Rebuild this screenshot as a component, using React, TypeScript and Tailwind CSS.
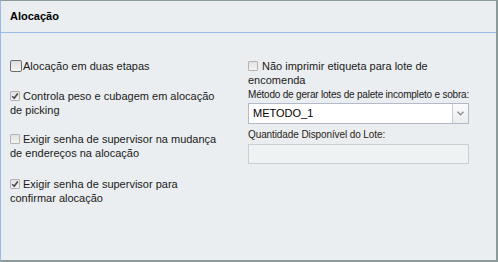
import React from 'react';

interface CheckProps {
  checked?: boolean;
  large?: boolean;
}

const Check: React.FC<CheckProps> = ({ checked, large }) => {
  if (large) {
    return (
      <span className="inline-block align-[-2px] w-[12px] h-[12px] mr-[1px] rounded-[2px] border border-[#6d6d6d] bg-gradient-to-b from-[#dcdcdc] to-[#f4f4f4]" />
    );
  }
  return (
    <span className="relative inline-block align-[-1px] w-[10px] h-[10px] mr-[3px] rounded-[1px] border border-[#b4b4b4] bg-gradient-to-b from-[#e2e2e2] to-[#f3f3f3]">
      {checked && (
        <svg className="absolute left-[0px] top-[0px] w-[8px] h-[8px]" viewBox="0 0 8 8">
          <path d="M1.2 4.2 L3.2 6.2 L6.8 1.4" fill="none" stroke="#4a4a4a" strokeWidth={1.6} />
        </svg>
      )}
    </span>
  );
};

const Item: React.FC<{ checked?: boolean; large?: boolean; className?: string; children: React.ReactNode }> = ({
  checked,
  large,
  className,
  children
}) => (
  <div className={`leading-[14px] text-[11px] text-[#1a1a1a] ${className ?? ''}`}>
    <Check checked={checked} large={large} />
    {children}
  </div>
);

export default function App() {
  return (
    <div
      className="w-[498px] h-[262px] flex flex-col bg-[#eaeef0] border-t border-t-[#8c9a9a] border-r-2 border-r-[#8c9a9a] border-b-2 border-b-[#8c9a9a] border-l border-l-[#99bbe8]"
      style={{ fontFamily: '"Liberation Sans", Arial, sans-serif' }}
    >
      {/* Header */}
      <div className="h-[32px] shrink-0 border-b border-[#99bbe8] flex items-center pl-[9px] pb-[1px]">
        <span className="text-[11px] font-bold text-black">Alocação</span>
      </div>

      {/* Body */}
      <div className="flex flex-1 pl-[9px] gap-[22px]">
        {/* Left column */}
        <div className="w-[216px] flex flex-col">
          <Item large className="mt-[26px]">Alocação em duas etapas</Item>
          <Item checked className="mt-[16px]">Controla peso e cubagem em alocação de picking</Item>
          <Item className="mt-[15px]">Exigir senha de supervisor na mudança de endereços na alocação</Item>
          <Item checked className="mt-[17px]">Exigir senha de supervisor para confirmar alocação</Item>
        </div>

        {/* Right column */}
        <div className="w-[221px] flex flex-col">
          <Item className="mt-[26px]">
            <span className="ml-[1px]">Não imprimir etiqueta para lote de encomenda</span>
          </Item>
          <div className="mt-[1px] text-[10px] leading-[13px] tracking-[-0.2px] whitespace-nowrap text-[#1a1a1a]">
            Método de gerar lotes de palete incompleto e sobra:
          </div>
          <div className="mt-[2px] h-[21px] flex bg-white border border-[#b5b8c8]">
            <div className="flex-1 flex items-center pl-[4px] text-[11px] text-black">METODO_1</div>
            <div className="w-[16px] flex items-center justify-center border-l border-[#c8ccd8] bg-gradient-to-b from-[#fbfbfb] to-[#eaecef]">
              <svg width="7" height="5" viewBox="0 0 7 5">
                <path d="M0.5 0.8 L3.5 3.8 L6.5 0.8" fill="none" stroke="#8a8f99" strokeWidth={1.4} />
              </svg>
            </div>
          </div>
          <div className="mt-[4px] text-[10px] leading-[13px] tracking-[-0.1px] text-[#2a2418]">Quantidade Disponível do Lote:</div>
          <div className="mt-[3px] h-[20px] bg-[#eff2f3] border border-[#c9d0d3]" />
        </div>
      </div>
    </div>
  );
}
